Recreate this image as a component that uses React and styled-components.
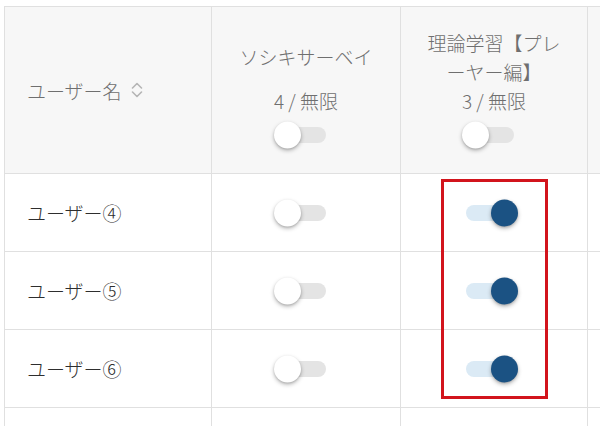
import React from "react";
import styled, { createGlobalStyle } from "styled-components";

const Global = createGlobalStyle`
  html, body { margin: 0; padding: 0; background: #ffffff; }
  body { font-family: "Noto Sans CJK JP", "Noto Sans", sans-serif; }
`;

const Page = styled.div`
  position: relative;
  width: 600px;
  height: 426px;
  overflow: hidden;
  padding: 6px 0 0 4px;
  box-sizing: border-box;
  background: #ffffff;
`;

const Table = styled.table`
  border-collapse: collapse;
  table-layout: fixed;
  width: 783px;
`;

const HeadRow = styled.tr`
  height: 167px;
  background: #f7f7f7;
`;

const BodyRow = styled.tr`
  height: 78px;
  background: #ffffff;
`;

const Th = styled.th`
  border: 1px solid #e0e0e0;
  padding: 0;
  padding-left: ${(p) => (p.$left ? "22px" : "0")};
  text-align: ${(p) => (p.$left ? "left" : "center")};
  vertical-align: middle;
  font-weight: 300;
  font-size: 19px;
  color: #6f6f6f;
`;

const Td = styled.td`
  border: 1px solid #e0e0e0;
  padding: 0;
  padding-left: ${(p) => (p.$left ? "22px" : "0")};
  text-align: ${(p) => (p.$left ? "left" : "center")};
  vertical-align: middle;
  font-weight: 300;
  font-size: 19px;
  color: #2e2e2e;
`;

const NameHead = styled.span`
  display: inline-flex;
  align-items: center;
  gap: 9px;
`;

const HeadStack = styled.div`
  display: flex;
  flex-direction: column;
  align-items: center;
  line-height: 29px;
  padding-bottom: 4px;
`;

const Title = styled.div`
  min-height: 58px;
  max-width: 142px;
  display: flex;
  align-items: center;
  justify-content: center;
  line-break: anywhere;
`;

const Count = styled.div`
  line-height: 29px;
`;

const SwitchSlot = styled.div`
  display: flex;
  align-items: center;
  justify-content: center;
  height: 27px;
  margin-top: ${(p) => (p.$head ? "7px" : "0")};
`;

const Track = styled.span`
  position: relative;
  display: inline-block;
  width: 48px;
  height: 16px;
  border-radius: 8px;
  margin-right: 8px;
  background: ${(p) => (p.$on ? "#dbeaf5" : "#e4e4e4")};
`;

const Thumb = styled.span`
  position: absolute;
  top: 50%;
  width: 27px;
  height: 27px;
  border-radius: 50%;
  transform: translateY(-50%);
  left: ${(p) => (p.$on ? "auto" : "-4px")};
  right: ${(p) => (p.$on ? "-4px" : "auto")};
  background: ${(p) => (p.$on ? "#1b5283" : "#ffffff")};
  box-shadow: 0 2px 4px rgba(0, 0, 0, 0.28), 0 1px 2px rgba(0, 0, 0, 0.12);
`;

const Highlight = styled.div`
  position: absolute;
  left: 441px;
  top: 179px;
  width: 107px;
  height: 220px;
  border: 3px solid #d2141c;
  box-sizing: border-box;
  pointer-events: none;
`;

function Switch({ on }) {
  return (
    <Track $on={on}>
      <Thumb $on={on} />
    </Track>
  );
}

function SortIcon() {
  return (
    <svg width="12" height="16" viewBox="0 0 12 16" fill="none">
      <path d="M1.5 6 L6 1.5 L10.5 6" stroke="#b5b5b5" strokeWidth="1.6" strokeLinecap="round" strokeLinejoin="round" />
      <path d="M1.5 10 L6 14.5 L10.5 10" stroke="#b5b5b5" strokeWidth="1.6" strokeLinecap="round" strokeLinejoin="round" />
    </svg>
  );
}

const users = ["ユーザー④", "ユーザー⑤", "ユーザー⑥", ""];

export default function App() {
  return (
    <>
      <Global />
      <Page>
        <Table>
          <colgroup>
            <col style={{ width: 207 }} />
            <col style={{ width: 189 }} />
            <col style={{ width: 187 }} />
            <col style={{ width: 200 }} />
          </colgroup>
          <thead>
            <HeadRow>
              <Th $left>
                <NameHead>
                  ユーザー名
                  <SortIcon />
                </NameHead>
              </Th>
              <Th>
                <HeadStack>
                  <Title>ソシキサーベイ</Title>
                  <Count>4 / 無限</Count>
                  <SwitchSlot $head>
                    <Switch on={false} />
                  </SwitchSlot>
                </HeadStack>
              </Th>
              <Th>
                <HeadStack>
                  <Title>理論学習【プレーヤー編】</Title>
                  <Count>3 / 無限</Count>
                  <SwitchSlot $head>
                    <Switch on={false} />
                  </SwitchSlot>
                </HeadStack>
              </Th>
              <Th />
            </HeadRow>
          </thead>
          <tbody>
            {users.map((u, i) => (
              <BodyRow key={i}>
                <Td $left>{u}</Td>
                <Td>
                  {u && (
                    <SwitchSlot>
                      <Switch on={false} />
                    </SwitchSlot>
                  )}
                </Td>
                <Td>
                  {u && (
                    <SwitchSlot>
                      <Switch on={true} />
                    </SwitchSlot>
                  )}
                </Td>
                <Td />
              </BodyRow>
            ))}
          </tbody>
        </Table>
        <Highlight />
      </Page>
    </>
  );
}
